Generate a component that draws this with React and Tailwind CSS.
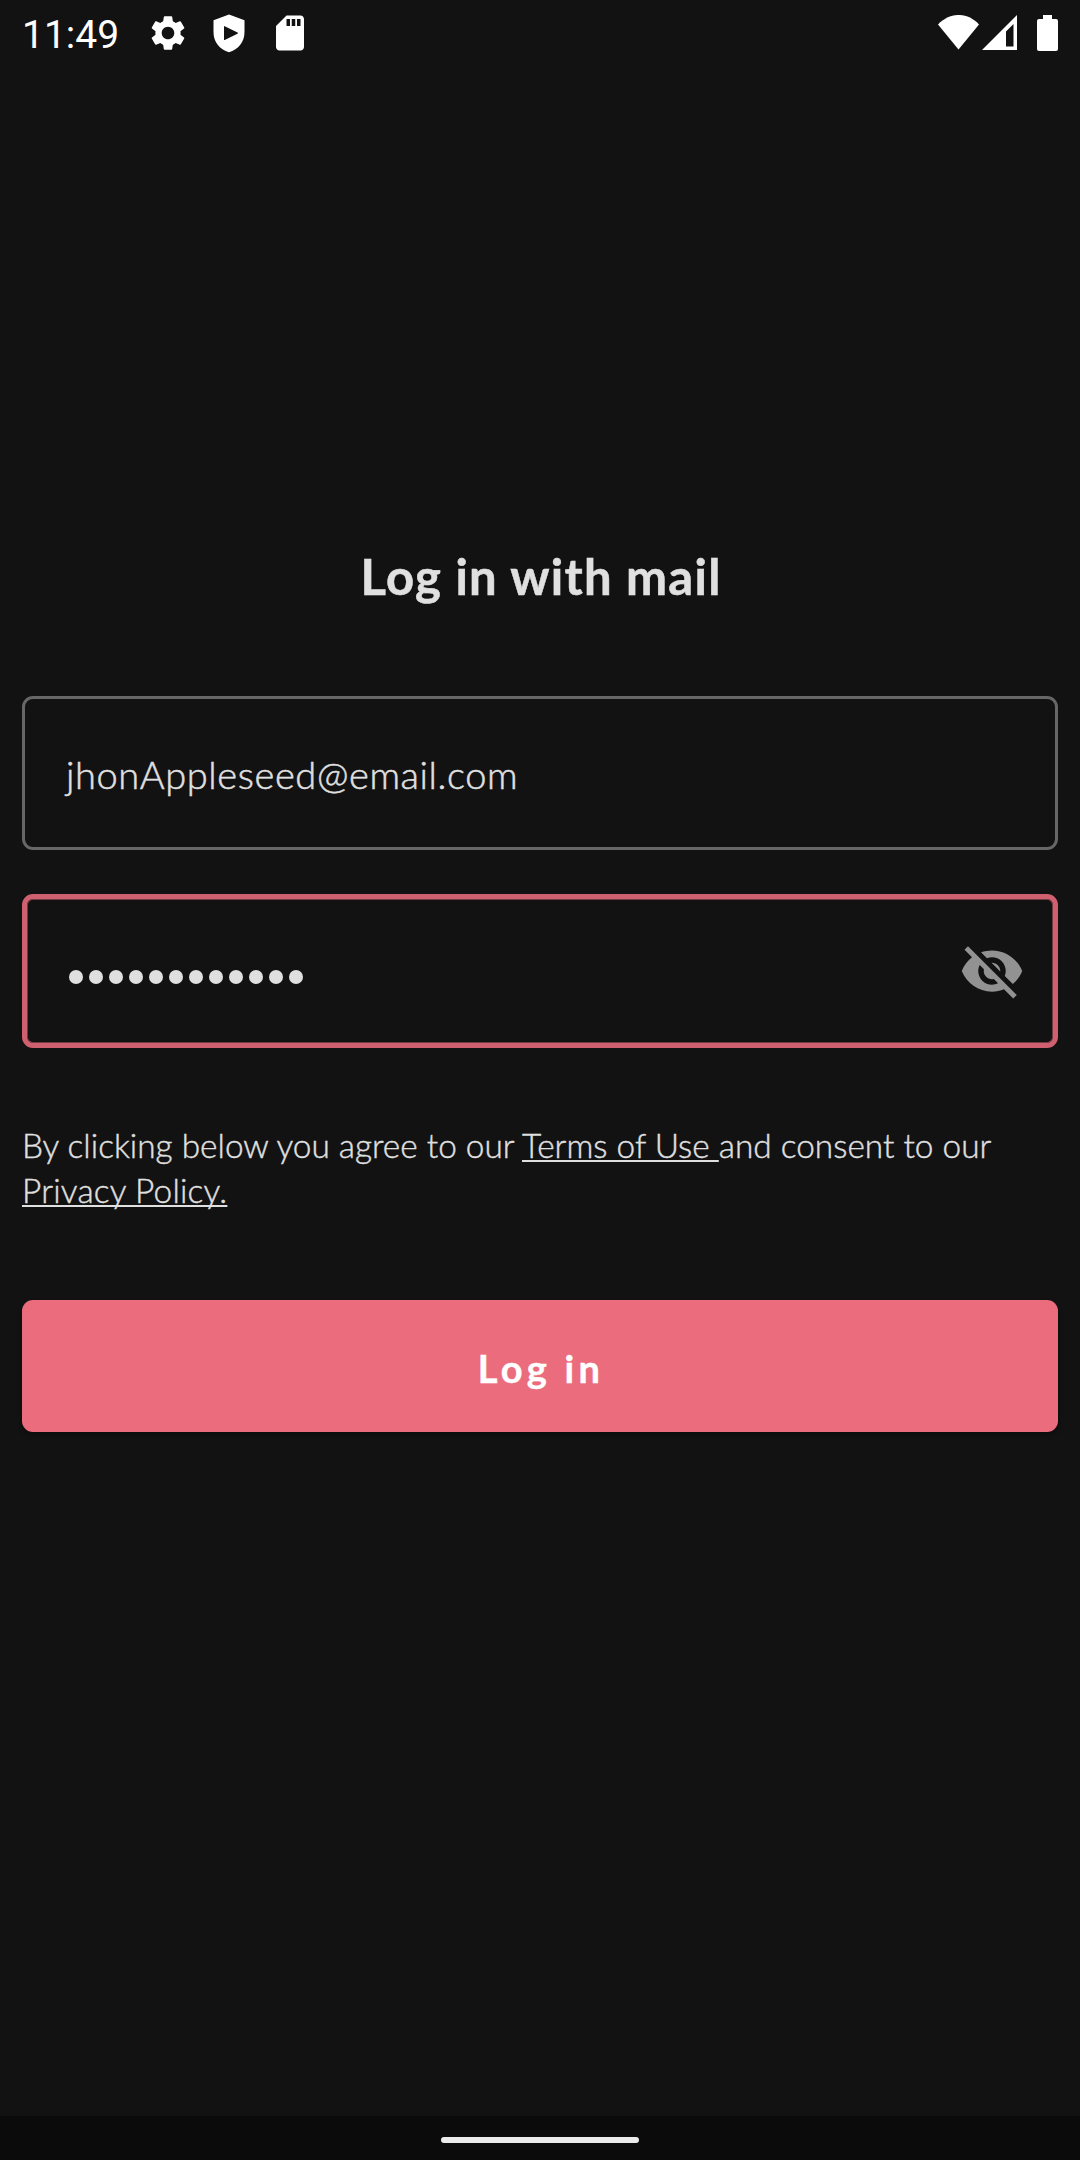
import { MdSettings, MdSdCard, MdVisibilityOff } from "react-icons/md";

function StatusBar() {
  return (
    <header className="flex h-[66px] items-start text-white">
      <span className="ml-[22px] mt-[13px] w-[125px] font-['Roboto'] text-[39px] leading-[44px]">11:49</span>
      <MdSettings className="mt-[12px] size-[42px]" />
      <svg className="ml-[24px] mt-[14px] h-[39px] w-[32px]" viewBox="0 0 32 39" fill="currentColor">
        <path fillRule="evenodd" d="M16 .5 31.5 6.3V18C31.5 28 25.500 35.500 16 38.300 6.500 35.500.500 28 .500 18V6.300ZM11 12.500Q11 11.800 11.700 12.200L24.500 18.500Q25.500 19 24.500 19.700L11.700 26Q11 26.300 11 25.500Z" />
      </svg>
      <MdSdCard className="ml-[24px] mt-[12px] size-[42px]" />
      <svg className="ml-auto mt-[15px] h-[36px] w-[42px]" viewBox="0 0 42 36" fill="currentColor">
        <path d="M0 9.500C12-3.200 29.500-3.200 41 9.500L20.500 34.500Z" />
      </svg>
      <svg className="ml-[2px] mt-[15px] h-[35px] w-[35px]" viewBox="0 0 35 35" fill="currentColor">
        <path fillRule="evenodd" d="M35 0V35H0ZM31.500 9 24 16.500V31.500H31.500Z" />
      </svg>
      <svg className="ml-[20px] mr-[22px] mt-[15px] h-[36px] w-[21px]" viewBox="0 0 21 36" fill="currentColor">
        <path d="M6 0H15V4H19Q21 4 21 6V34Q21 36 19 36H2Q0 36 0 34V6Q0 4 2 4H6Z" />
      </svg>
    </header>
  );
}

function PasswordDots() {
  return (
    <div className="flex gap-[6px]">
      {Array.from({ length: 12 }, (_, i) => (
        <span key={i} className="size-[14px] rounded-full bg-[#e0e0e0]" />
      ))}
    </div>
  );
}

export default function App() {
  return (
    <div className="flex h-[2160px] w-[1080px] flex-col overflow-hidden bg-[#121212] font-['Lato',sans-serif] text-[#e0e0e0]">
      <StatusBar />
      <main className="flex flex-1 flex-col px-[22px]">
        <h1 className="mt-[480px] h-[61px] whitespace-nowrap pl-[2px] text-center text-[49px] font-bold leading-[61px] tracking-[1.260px] [-webkit-text-stroke:0.5px_#e0e0e0]">Log in with mail</h1>

        <div className="mt-[89px] flex h-[154px] items-center rounded-[11px] border-3 border-[#676767] pl-[41px]">
          <span className="mt-[2px] whitespace-nowrap text-[38px] font-light leading-[48px] tracking-[0.6px] [-webkit-text-stroke:0.5px_#e0e0e0]">jhonAppleseed@email.com</span>
        </div>

        <div className="mt-[44px] flex h-[154px] items-center justify-between rounded-[11px] border-5 border-[#cf6070] pl-[42px] pr-[28px] shadow-[inset_0_0_0_1px_#713941]">
          <div className="mt-[12px]"><PasswordDots /></div>
          <MdVisibilityOff className="size-[66px] text-[#929292]" />
        </div>

        <p className="mt-[75px] whitespace-nowrap text-[33.400px] font-light leading-[45px] [-webkit-text-stroke:0.4px_#e0e0e0]">
          By clicking below you agree to our{" "}
          <a className="whitespace-pre underline decoration-2 underline-offset-[2px] [text-decoration-skip-ink:none]">Terms of Use </a>
          and consent to our
          <br />
          <a className="tracking-[0.2px] underline decoration-2 underline-offset-[2px] [text-decoration-skip-ink:none]">Privacy Policy.</a>
        </p>

        <button className="mt-[87px] h-[132px] rounded-[11px] bg-[#eb6d7d] pl-[2px] pt-[4px] text-[38px] font-bold tracking-[4.300px] text-white shadow-[0_3px_5px_rgba(0,0,0,0.3)] [-webkit-text-stroke:0.4px_white]">
          Log in
        </button>
      </main>
      <footer className="flex h-[44px] items-start justify-center bg-[#0b0b0b] pt-[21px]">
        <div className="h-[6px] w-[198px] rounded-full bg-[#ebebeb]" />
      </footer>
    </div>
  );
}
